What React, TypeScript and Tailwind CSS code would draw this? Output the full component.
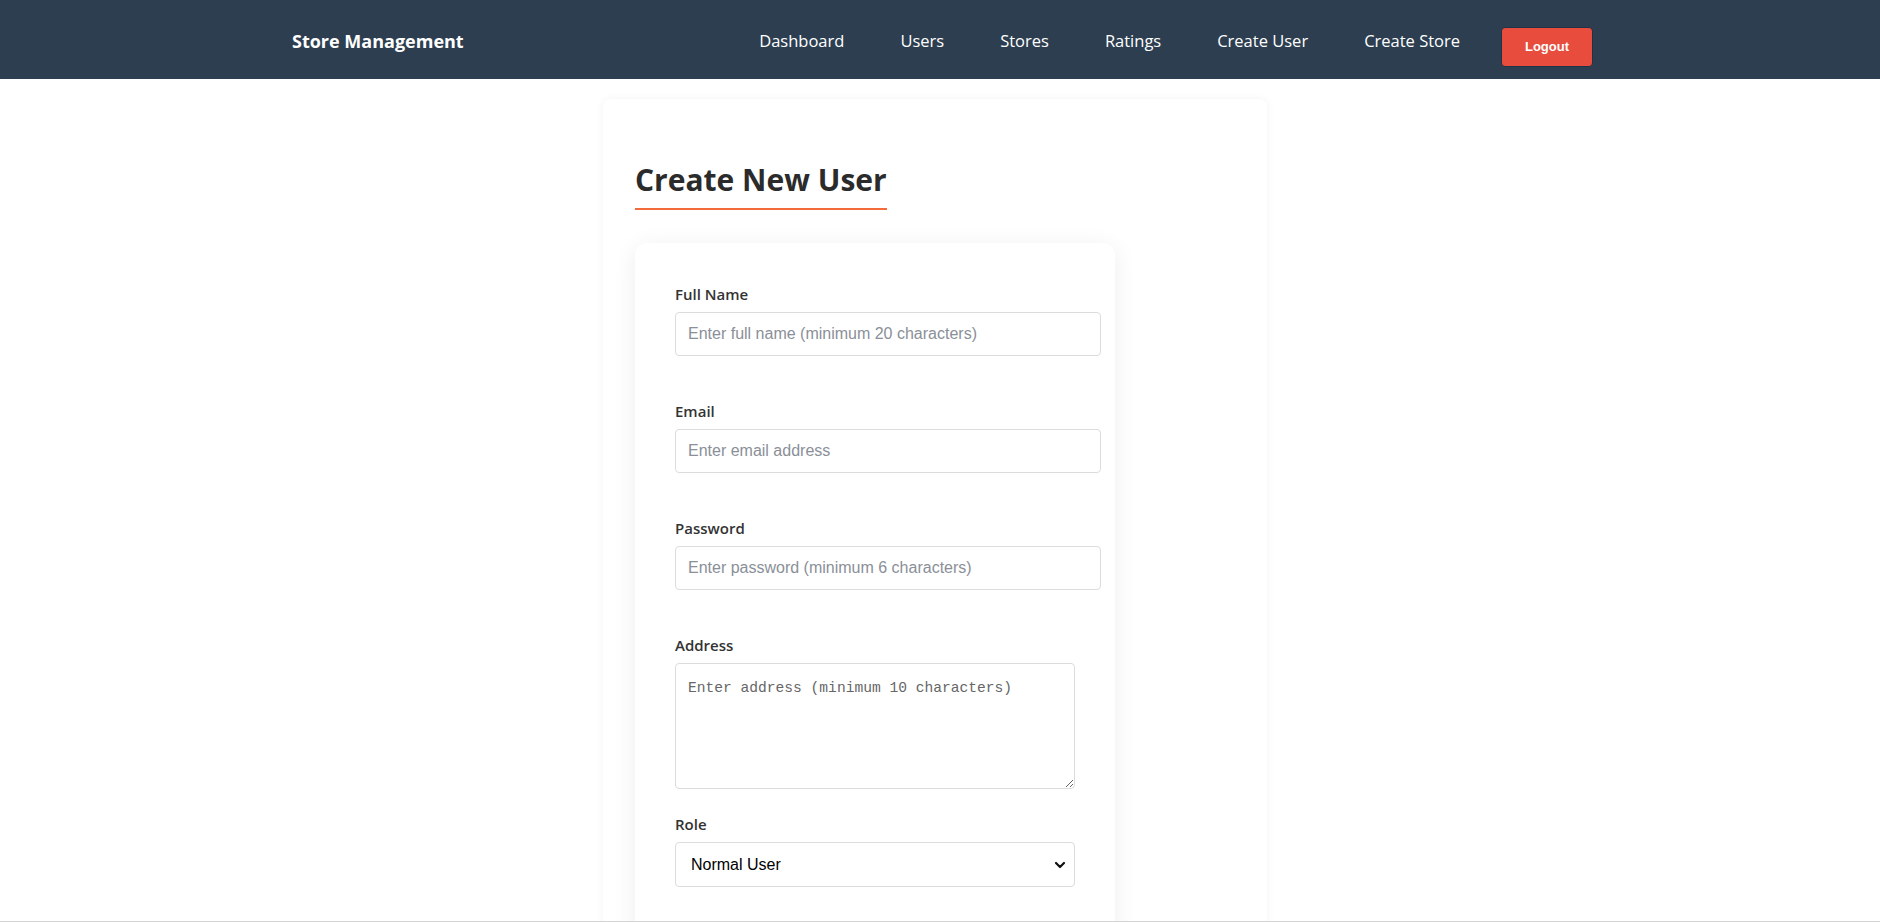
const navLinks = ['Dashboard', 'Users', 'Stores', 'Ratings', 'Create User', 'Create Store'];

const textFields = [
  { label: 'Full Name', type: 'text', placeholder: 'Enter full name (minimum 20 characters)' },
  { label: 'Email', type: 'email', placeholder: 'Enter email address' },
  { label: 'Password', type: 'password', placeholder: 'Enter password (minimum 6 characters)' },
];

function Navbar() {
  return (
    <nav className="h-[79px] bg-[#2c3e50]">
      <div className="flex h-full items-center justify-between pt-[4px] pl-[292px] pr-[287px]">
        <span className="text-[18px] font-bold text-white">Store Management</span>
        <div className="flex items-center">
          <div className="flex items-center gap-[56px]">
            {navLinks.map((name) => (
              <a key={name} href="#" className="text-[16.5px] text-white">
                {name}
              </a>
            ))}
          </div>
          <button className="mt-[11px] ml-[41px] h-[40px] w-[92px] rounded-[4px] border border-[#1e3347] bg-[#e74c3c] font-['Liberation_Sans',Arial,sans-serif] text-[13px] font-bold text-white">
            Logout
          </button>
        </div>
      </div>
    </nav>
  );
}

export default function App() {
  return (
    <div className="min-h-screen overflow-hidden bg-white font-['Open_Sans','Noto_Sans',sans-serif]">
      <Navbar />

      <div className="pt-[20px] pr-[10px]">
        <div className="mx-auto w-[664px] rounded-[8px] bg-white px-[32px] pt-[63px] pb-10 shadow-[0_0_10px_rgba(0,0,0,0.05)]">
          <h2 className="inline-block border-b-2 border-[#f26b3a] pb-[10px] text-[30px] leading-[1.2] font-bold text-[#2b2b2b]">
            Create New User
          </h2>

          <form className="mt-[33px] w-[480px] rounded-[12px] bg-white p-[40px] shadow-[0_4px_24px_rgba(0,0,0,0.07)]">
            {textFields.map((f) => (
              <div key={f.label} className="mb-[44px]">
                <label className="mb-[7px] block text-[15px] leading-[22px] font-semibold text-[#333]">
                  {f.label}
                </label>
                <input
                  type={f.type}
                  placeholder={f.placeholder}
                  className="h-[44px] w-[426px] rounded-[4px] border border-[#dcdcdc] px-[12px] font-['Liberation_Sans',Arial,sans-serif] text-[16px] text-[#222] outline-none placeholder:text-[#8a8f98]"
                />
              </div>
            ))}

            <div className="mb-[24px]">
              <label className="mb-[7px] block text-[15px] leading-[22px] font-semibold text-[#333]">
                Address
              </label>
              <textarea
                placeholder="Enter address (minimum 10 characters)"
                className="block h-[126px] w-[400px] resize-y rounded-[4px] border border-[#dcdcdc] px-[12px] pt-[14px] font-['Liberation_Mono',monospace] text-[14.6px] text-[#222] outline-none placeholder:text-[#666]"
              />
            </div>

            <div className="mb-[60px]">
              <label className="mb-[7px] block text-[15px] leading-[22px] font-semibold text-[#333]">
                Role
              </label>
              <div className="relative w-[400px]">
                <select className="h-[45px] w-full appearance-none rounded-[4px] border border-[#dcdcdc] bg-white pl-[15px] font-['Liberation_Sans',Arial,sans-serif] text-[16px] text-black outline-none">
                  <option>Normal User</option>
                  <option>Store Owner</option>
                  <option>Admin</option>
                </select>
                <svg
                  className="pointer-events-none absolute top-1/2 right-[9px] -translate-y-1/2"
                  width="12"
                  height="8"
                  viewBox="0 0 12 8"
                  fill="none"
                >
                  <path d="M2 2l4 4 4-4" stroke="#111" strokeWidth="2.2" strokeLinecap="round" strokeLinejoin="round" />
                </svg>
              </div>
            </div>
          </form>
        </div>
      </div>

      <div className="fixed bottom-0 left-0 h-px w-full bg-[#d4d4d4]" />
    </div>
  );
}
